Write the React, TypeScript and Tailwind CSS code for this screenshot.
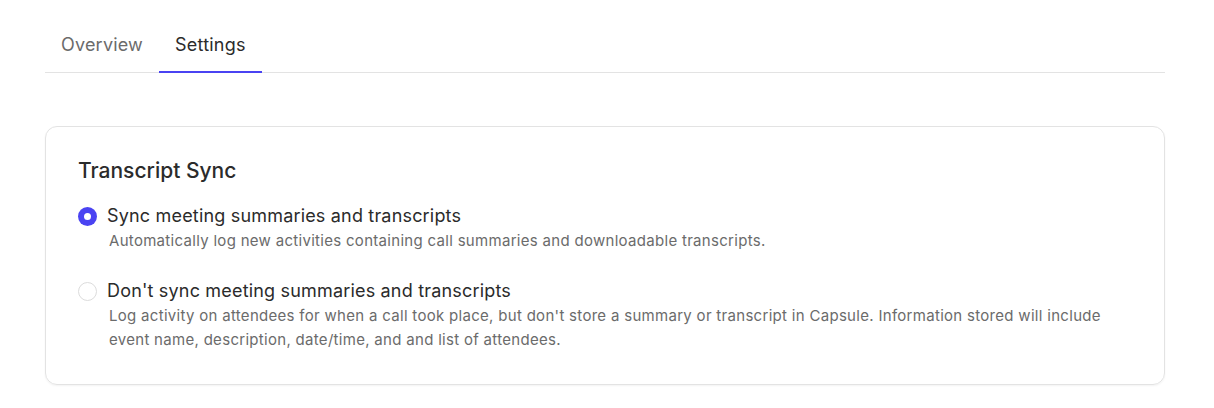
import { useState } from 'react';

type Option = {
  id: string;
  label: string;
  description: string;
};

const options: Option[] = [
  {
    id: 'sync',
    label: 'Sync meeting summaries and transcripts',
    description: 'Automatically log new activities containing call summaries and downloadable transcripts.'
  },
  {
    id: 'nosync',
    label: "Don't sync meeting summaries and transcripts",
    description:
      "Log activity on attendees for when a call took place, but don't store a summary or transcript in Capsule. Information stored will include event name, description, date/time, and and list of attendees."
  }
];

function Radio({ checked }: { checked: boolean }) {
  if (checked) {
    return (
      <span className="flex h-[19px] w-[19px] shrink-0 items-center justify-center rounded-full bg-[#4a43f2]">
        <span className="h-[7px] w-[7px] rounded-full bg-white" />
      </span>
    );
  }
  return <span className="h-[19px] w-[19px] shrink-0 rounded-full border border-[#dcdcdc] bg-white" />;
}

export default function App() {
  const [tab, setTab] = useState('settings');
  const [value, setValue] = useState('sync');

  return (
    <div className="min-h-[408px] bg-white pl-[45px] pt-[23px] text-[#2b2b2b]" style={{ fontFamily: 'Inter, "Noto Sans", sans-serif' }}>
      <div className="w-[1120px]">
        <div className="flex border-b border-[#e3e3e3]">
          {[
            ['overview', 'Overview'],
            ['settings', 'Settings']
          ].map(([id, name]) => (
            <button
              key={id}
              onClick={() => setTab(id)}
              className={`-mb-px border-b-2 px-4 pb-[14px] pt-[10px] text-[18px] leading-6 tracking-[0.2px] ${
                tab === id ? 'border-[#4a43f2] text-[#2b2b2b]' : 'border-transparent text-[#6b6b6b]'
              }`}
            >
              {name}
            </button>
          ))}
        </div>

        <div className="mt-[53px] rounded-xl border border-[#e3e3e3] px-8 pb-[32px] pt-[30px] shadow-[0_1px_2px_rgba(0,0,0,0.05)]">
          <h2 className="text-[21px] font-medium leading-7 text-[#2b2b2b]">Transcript Sync</h2>
          <div className="mt-[19px] flex flex-col gap-[26px]">
            {options.map((o) => (
              <label key={o.id} className="block cursor-pointer" onClick={() => setValue(o.id)}>
                <div className="flex items-center gap-[10px]">
                  <Radio checked={value === o.id} />
                  <span className="text-[18px] leading-6 tracking-[0.18px] text-[#2b2b2b]">{o.label}</span>
                </div>
                <p className="ml-[31px] mt-[1px] text-[15px] leading-6 tracking-[0.3px] text-[#6b6b6b]">{o.description}</p>
              </label>
            ))}
          </div>
        </div>
      </div>
    </div>
  );
}
